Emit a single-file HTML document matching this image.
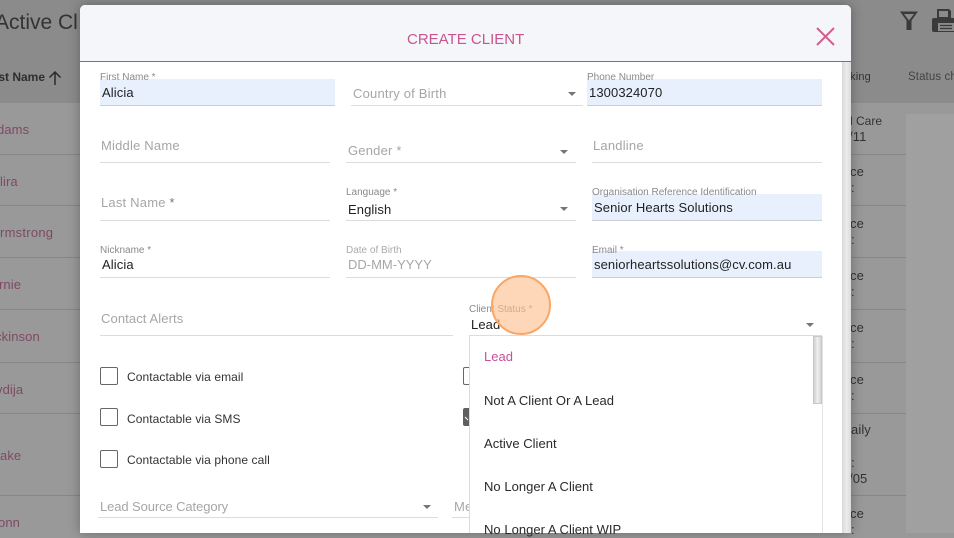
<!DOCTYPE html>
<html><head><meta charset="utf-8"><style>
html,body{margin:0;padding:0}
body{width:954px;height:533px;overflow:hidden;position:relative;background:#999;font-family:"Liberation Sans",sans-serif}
.a{position:absolute}
.t{position:absolute;white-space:nowrap;font-size:13px;line-height:16px;letter-spacing:.1px}
.ph{color:#a6a6a6;letter-spacing:.2px}.lb{font-size:10px;line-height:12px;color:#8a8a8a;letter-spacing:0;margin-top:1px}
.v{color:#222}.bg{color:#333}.m{color:#7e4a63}
.u{position:absolute;height:1px;background:#dcdcdc}
.f{position:absolute;background:#e8f0fe;border-bottom:1px solid #c9ced8}
.sep{position:absolute;height:1px;background:#868686}
.ar{position:absolute;width:0;height:0;border-left:4.5px solid transparent;border-right:4.5px solid transparent;border-top:4px solid #757575}
.cb{position:absolute;left:100px;width:16px;height:16px;border:1px solid #666;border-radius:2px;background:#fff}
.o{position:absolute;left:484px;font-size:13px;line-height:16px;letter-spacing:.03px;color:#2a2a2a;white-space:nowrap}
</style></head><body>
<div class="a" style="left:0;top:0;width:954px;height:103px;background:#8b8b8b"></div>
<div class="a" style="left:906px;top:114px;width:48px;height:419px;background:#a0a0a0"></div>
<div class="t bg" style="left:-5px;top:8px;font-size:21px;line-height:30px;letter-spacing:0">Active Cl</div>
<div class="t" style="left:-17px;top:69px;font-size:12px;font-weight:bold;color:#2e2e2e;letter-spacing:0">First Name</div>
<svg class="a" style="left:47px;top:70px" width="16" height="16" viewBox="0 0 16 16"><path d="M8 15V2M2.5 7.5L8 2l5.5 5.5" fill="none" stroke="#2a2a2a" stroke-width="1.5"/></svg>
<div class="t bg" style="left:851px;top:69px;font-size:11px;letter-spacing:.2px;margin-left:-1px">king</div>
<div class="t" style="left:908px;top:69px;font-size:11.5px;color:#444;letter-spacing:.1px">Status ch</div>
<svg class="a" style="left:899px;top:10px" width="20" height="21" viewBox="0 0 20 21"><path d="M1 1.5H19L12.5 10.5V20H7.5V10.5Z M5 4L10 10.5V17.5H10V10.5L15 4Z" fill="#3a3a3a" fill-rule="evenodd"/></svg>
<svg class="a" style="left:931px;top:7px" width="23" height="27" viewBox="0 0 23 27"><path d="M6 2H18L20 4V11H6Z" fill="#3a3a3a"/><path d="M8 4H17V10H8Z" fill="#8b8b8b"/><path d="M3 11H23V25H3Q1 25 1 23V13Q1 11 3 11Z" fill="#3a3a3a"/><path d="M7 16H23V24H7Z" fill="#8b8b8b"/><path d="M9 18.5H21M9 21.5H21" stroke="#3a3a3a" stroke-width="1.2"/></svg>

<div class="sep" style="left:0;top:154px;width:80px"></div><div class="sep" style="left:0;top:205px;width:80px"></div><div class="sep" style="left:0;top:257px;width:80px"></div><div class="sep" style="left:0;top:309px;width:80px"></div><div class="sep" style="left:0;top:362px;width:80px"></div><div class="sep" style="left:0;top:413px;width:80px"></div><div class="sep" style="left:0;top:495px;width:80px"></div>
<div class="sep" style="left:851px;top:154px;width:55px"></div><div class="sep" style="left:851px;top:205px;width:55px"></div><div class="sep" style="left:851px;top:257px;width:55px"></div><div class="sep" style="left:851px;top:309px;width:55px"></div><div class="sep" style="left:851px;top:362px;width:55px"></div><div class="sep" style="left:851px;top:413px;width:55px"></div><div class="sep" style="left:851px;top:495px;width:55px"></div>

<div class="t m" style="left:-3px;top:122px">dams</div>
<div class="t m" style="left:0;top:174px">lira</div>
<div class="t m" style="left:0;top:225px;letter-spacing:.25px">rmstrong</div>
<div class="t m" style="left:-1px;top:277px">rnie</div>
<div class="t m" style="left:-5px;top:329px">ckinson</div>
<div class="t m" style="left:-4px;top:382px">vdija</div>
<div class="t m" style="left:0;top:448px">ake</div>
<div class="t m" style="left:-2px;top:515px">onn</div>

<div class="t bg" style="left:850px;top:113px;font-size:12px;letter-spacing:0">l Care</div>
<div class="t bg" style="left:849px;top:129px">/11</div>
<div class="t bg" style="left:850px;top:164px">ce</div><div class="t bg" style="left:851px;top:180px">:</div>
<div class="t bg" style="left:850px;top:216px">ce</div><div class="t bg" style="left:851px;top:232px">:</div>
<div class="t bg" style="left:850px;top:268px">ce</div><div class="t bg" style="left:851px;top:284px">:</div>
<div class="t bg" style="left:850px;top:320px">ce</div><div class="t bg" style="left:851px;top:336px">:</div>
<div class="t bg" style="left:850px;top:372px">ce</div><div class="t bg" style="left:851px;top:388px">:</div>
<div class="t bg" style="left:851px;top:422px">aily</div><div class="t bg" style="left:851px;top:455px">:</div>
<div class="t bg" style="left:849px;top:471px">/05</div>
<div class="t bg" style="left:850px;top:506px">ce</div><div class="t bg" style="left:851px;top:522px">:</div>

<!-- modal -->
<div class="a" style="left:80px;top:5px;width:771px;height:528px;background:#fff;border-radius:5px 5px 0 0;box-shadow:0 0 12px rgba(0,0,0,.3);overflow:hidden">
 <div class="a" style="left:762px;top:56px;width:9px;height:472px;background:linear-gradient(90deg,#d8d8d8,#ececec 50%,#dadada)"></div>
 <div class="a" style="left:0;top:0;width:771px;height:56px;background:#f4f6fa;border-bottom:1px solid #b0548a"></div>
</div>
<div class="t" style="left:407px;top:28px;font-size:15px;line-height:20px;color:#c8558f;letter-spacing:0;margin-top:2px">CREATE CLIENT</div>
<svg class="a" style="left:815px;top:26px" width="21" height="21" viewBox="0 0 21 21"><path d="M2 2L19 19M19 2L2 19" stroke="#d0608f" stroke-width="2" fill="none"/></svg>

<div class="f" style="left:100px;top:79px;width:235px;height:26px"></div>
<div class="f" style="left:587px;top:79px;width:235px;height:26px"></div>
<div class="f" style="left:592px;top:194px;width:230px;height:26px"></div>
<div class="f" style="left:592px;top:251px;width:230px;height:26px"></div>

<div class="t lb" style="left:100px;top:71px">First Name *</div>
<div class="t v" style="left:102px;top:85px">Alicia</div>
<div class="t ph" style="left:353px;top:86px">Country of Birth</div>
<div class="u" style="left:351px;top:105px;width:232px"></div><div class="ar" style="left:568px;top:92px"></div>
<div class="t lb" style="left:587px;top:71px">Phone Number</div>
<div class="t v" style="left:589px;top:85px">1300324070</div>

<div class="t ph" style="left:101px;top:138px">Middle Name</div><div class="u" style="left:100px;top:162px;width:230px"></div>
<div class="t ph" style="left:348px;top:143px">Gender *</div><div class="u" style="left:346px;top:162px;width:230px"></div><div class="ar" style="left:560px;top:150px"></div>
<div class="t ph" style="left:593px;top:138px">Landline</div><div class="u" style="left:592px;top:162px;width:230px"></div>

<div class="t ph" style="left:101px;top:195px">Last Name <span style="color:#777">*</span></div><div class="u" style="left:100px;top:220px;width:230px"></div>
<div class="t lb" style="left:346px;top:186px">Language *</div>
<div class="t v" style="left:348px;top:202px">English</div><div class="u" style="left:346px;top:220px;width:230px"></div><div class="ar" style="left:560px;top:207px"></div>
<div class="t lb" style="left:592px;top:186px">Organisation Reference Identification</div>
<div class="t v" style="left:594px;top:200px">Senior Hearts Solutions</div>

<div class="t lb" style="left:100px;top:244px">Nickname *</div>
<div class="t v" style="left:102px;top:257px">Alicia</div><div class="u" style="left:100px;top:277px;width:230px"></div>
<div class="t lb" style="left:346px;top:244px;color:#aaa">Date of Birth</div>
<div class="t ph" style="left:348px;top:257px;letter-spacing:0">DD-MM-YYYY</div><div class="u" style="left:346px;top:277px;width:230px"></div>
<div class="t lb" style="left:592px;top:244px">Email *</div>
<div class="t v" style="left:594px;top:257px">seniorheartssolutions@cv.com.au</div>

<div class="t ph" style="left:101px;top:311px;letter-spacing:.1px">Contact Alerts</div><div class="u" style="left:100px;top:335px;width:353px"></div>
<div class="t lb" style="left:469px;top:303px">Client Status *</div>
<div class="t v" style="left:471px;top:317px">Lead</div><div class="u" style="left:469px;top:335px;width:353px"></div><div class="ar" style="left:806px;top:323px"></div>

<div class="cb" style="top:367px"></div><div class="t" style="left:127px;top:369px;font-size:12px;color:#333;letter-spacing:.08px">Contactable via email</div>
<div class="cb" style="top:408px"></div><div class="t" style="left:127px;top:411px;font-size:12px;color:#333;letter-spacing:.08px">Contactable via SMS</div>
<div class="cb" style="top:450px"></div><div class="t" style="left:127px;top:452px;font-size:12px;color:#333;letter-spacing:.08px">Contactable via phone call</div>
<div class="a" style="left:463px;top:367px;width:10px;height:16px;border:1px solid #666;border-radius:2px 0 0 2px;background:#fff"></div>
<div class="a" style="left:463px;top:408px;width:12px;height:18px;background:#5f5f5f;border-radius:2px 0 0 2px"></div>
<svg class="a" style="left:463px;top:408px" width="6" height="18"><path d="M2 9L5 12" stroke="#fff" stroke-width="1" fill="none"/></svg>

<div class="t ph" style="left:100px;top:499px;letter-spacing:-.1px">Lead Source Category</div><div class="u" style="left:98px;top:517px;width:340px"></div><div class="ar" style="left:423px;top:505px"></div>
<div class="t ph" style="left:454px;top:499px">Me</div><div class="u" style="left:452px;top:517px;width:20px"></div>

<div class="a" style="left:469px;top:336px;width:354px;height:197px;background:#fff;border-left:1px solid #dcdcdc;border-right:1px solid #e4e4e4;box-sizing:border-box;overflow:hidden">
 <div class="a" style="right:0;top:0;width:9px;height:68px;border:1px solid #c8c8c8;box-sizing:border-box;background:linear-gradient(90deg,#cfcfcf,#f0f0f0 50%,#d4d4d4)"></div>
</div>
<div class="o" style="top:349px;color:#c8509a">Lead</div>
<div class="o" style="top:393px">Not A Client Or A Lead</div>
<div class="o" style="top:436px">Active Client</div>
<div class="o" style="top:479px">No Longer A Client</div>
<div class="o" style="top:522px">No Longer A Client WIP</div>

<div class="a" style="left:491px;top:275px;width:60px;height:60px;box-sizing:border-box;border-radius:50%;background:rgba(253,190,140,.62);border:2px solid #f9a766"></div>
</body></html>
